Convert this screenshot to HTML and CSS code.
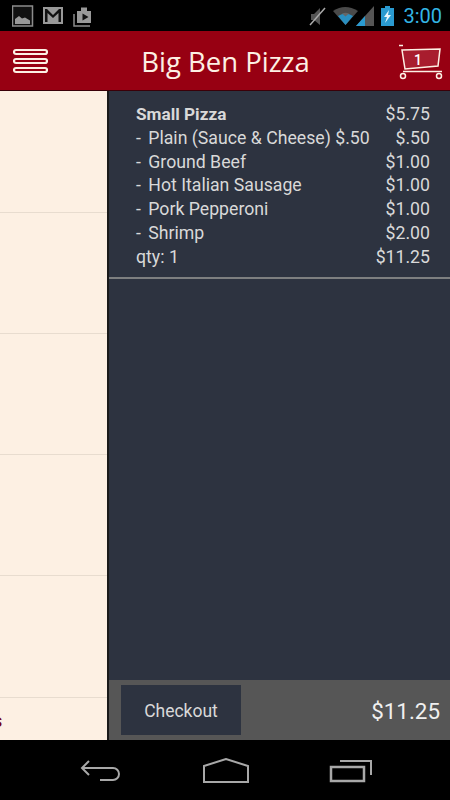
FILE: index.html
```html
<!DOCTYPE html>
<html lang="en">
<head>
<meta charset="utf-8">
<title>Big Ben Pizza</title>
<link rel="stylesheet" href="styles.css">
</head>
<body>
<div class="phone">
  <div class="status">
    <div class="status-left">
      <svg class="ic" width="22" height="22" viewBox="0 0 22 22"><rect x="0.500" y="1" width="20" height="20" fill="#111" stroke="#8c8c8c" stroke-width="1.500"/><path d="M3 19v-5l4-3 3 2.500 3-1 5 3V19z" fill="#999"/></svg>
      <svg class="ic" width="22" height="22" viewBox="0 0 22 22"><rect x="1" y="2" width="20" height="17" fill="#999"/><path d="M3 17V4h2l6 6 6-6h2v13h-2.500V8L11 13 5.500 8v9z" fill="#111"/></svg>
      <svg class="ic" width="22" height="22" viewBox="0 0 22 22"><path d="M2 9v12h16" fill="none" stroke="#8c8c8c" stroke-width="1.500"/><path d="M5 6h4V2.500h6V6h4v12H5z" fill="#999"/><path d="M10.500 8.500v7l6-3.500z" fill="#111"/></svg>
    </div>
    <div class="status-right">
      <svg class="ic" width="20" height="22" viewBox="0 0 20 22"><path d="M3 9h3l6-6v17l-6-5H3z" fill="#555"/><path d="M2 20L17 3" stroke="#aaa" stroke-width="1.500"/></svg>
      <svg class="ic wifi" width="25" height="20" viewBox="0 0 25 20"><path d="M0 5Q12-3 25 5L12.500 19z" fill="#4a4a4a"/><path d="M5 10Q12.500 5 20 10l-7.500 9z" fill="#2a8fc0"/><path d="M9 7.500Q12.500 6 16 7.500l-3.500 3z" fill="#666"/></svg>
      <svg class="ic signal" width="18" height="20" viewBox="0 0 18 20"><path d="M0 20L18 0v20z" fill="#555"/><path d="M0 20L9 10v10z" fill="#2a9ad0"/></svg>
      <svg class="ic batt" width="13" height="20" viewBox="0 0 13 20"><path d="M4 0h5v2h4v18H0V2h4z" fill="#2a9ad0"/><path d="M8 4L3 11h3l-2 6 6-8H7z" fill="#eaf6fc"/></svg>
      <span class="clock">3:00</span>
    </div>
  </div>
  <header class="appbar">
    <svg class="menu" width="36" height="28" viewBox="0 0 36 28"><g fill="none" stroke="#fdf0e4" stroke-width="2.200"><rect x="1" y="3" width="33" height="4" rx="2"/><rect x="1" y="12" width="33" height="4" rx="2"/><rect x="1" y="21" width="33" height="4" rx="2"/></g></svg>
    <h1 class="title">Big Ben Pizza</h1>
    <div class="cart">
      <svg width="48" height="38" viewBox="0 0 48 38"><path d="M4 3.500h4" stroke="#fdf0e4" stroke-width="1.500"/><path d="M7 8l38-1-2 17-33 3z" fill="#a81d2e" stroke="#fdf0e4" stroke-width="1.500"/><path d="M8 29.500h39" stroke="#fdf0e4" stroke-width="1.500"/><circle cx="8" cy="34" r="2.500" fill="none" stroke="#fdf0e4" stroke-width="1.500"/><circle cx="44" cy="34" r="2.500" fill="none" stroke="#fdf0e4" stroke-width="1.500"/></svg>
      <span class="cart-count">1</span>
    </div>
  </header>
  <main class="content">
    <div class="list">
      <div class="row"></div>
      <div class="row"></div>
      <div class="row"></div>
      <div class="row"></div>
      <div class="row tall"></div>
      <div class="row last"><span class="cut">s</span></div>
    </div>
    <div class="order">
      <div class="items">
        <div class="line"><span class="bold">Small Pizza</span><span>$5.75</span></div>
        <div class="line"><span><span class="dash">-</span> Plain (Sauce &amp; Cheese) $.50</span><span>$.50</span></div>
        <div class="line"><span><span class="dash">-</span> Ground Beef</span><span>$1.00</span></div>
        <div class="line"><span><span class="dash">-</span> Hot Italian Sausage</span><span>$1.00</span></div>
        <div class="line"><span><span class="dash">-</span> Pork Pepperoni</span><span>$1.00</span></div>
        <div class="line"><span><span class="dash">-</span> Shrimp</span><span>$2.00</span></div>
        <div class="line"><span>qty: 1</span><span>$11.25</span></div>
      </div>
      <div class="spacer"></div>
      <div class="footer">
        <button class="checkout">Checkout</button>
        <span class="total">$11.25</span>
      </div>
    </div>
  </main>
  <nav class="navbar">
    <svg width="44" height="26" viewBox="0 0 44 26"><path d="M10 3L3 10l7 7M3 10h31a6 6 0 0 1 0 12H21" fill="none" stroke="#a8a8a8" stroke-width="2"/></svg>
    <svg width="48" height="26" viewBox="0 0 48 26"><path d="M2 8L24 1l22 7v16H2z" fill="none" stroke="#a8a8a8" stroke-width="2"/></svg>
    <svg width="44" height="26" viewBox="0 0 44 26"><rect x="2" y="9" width="33" height="14" fill="none" stroke="#a8a8a8" stroke-width="2.500"/><path d="M11 3h31v14" fill="none" stroke="#a8a8a8" stroke-width="2"/></svg>
  </nav>
</div>
</body>
</html>
```
FILE: styles.css
```css
* { box-sizing: border-box; }
html, body { margin: 0; padding: 0; }
body { width: 450px; height: 800px; overflow: hidden; font-family: Roboto, sans-serif; background: #000; }
.phone { width: 450px; height: 800px; display: flex; flex-direction: column; }
.status { height: 31px; flex: none; background: #000; display: flex; justify-content: space-between; align-items: center; padding: 0 8px 0 12px; }
.status-left { display: flex; gap: 8px; align-items: center; }
.status-right { display: flex; align-items: center; }
.ic { display: block; }
.wifi { margin-left: 5px; }
.signal { margin-left: -2px; }
.batt { margin: 0 9px 0 7px; }
.clock { color: #33b5e5; font-size: 20px; line-height: 22px; }
.appbar { height: 60px; flex: none; background: #970012; display: flex; align-items: center; padding: 0 7px 0 13px; border-bottom: 1px solid #3a0008; }
.menu { display: block; flex: none; margin-top: 1px; }
.title { margin: 0; flex: 1; text-align: center; color: #fdf0e4; font-family: "Open Sans", sans-serif; font-weight: 400; font-size: 27.500px; padding: 2px 0 0 7px; }
.cart { position: relative; width: 48px; height: 38px; flex: none; }
.cart svg { display: block; }
.cart-count { position: absolute; left: 0; right: 2px; top: 10px; text-align: center; color: #fff; font-size: 14px; line-height: 16px; font-weight: 500; }
.content { flex: 1; min-height: 0; display: flex; }
.list { width: 107px; flex: none; background: #fdf0e3; display: flex; flex-direction: column; overflow: hidden; padding-top: 1px; }
.row { height: 121px; flex: none; border-bottom: 1px solid #e8dccf; }
.row.tall { height: 122px; }
.row.last { border: 0; height: 42px; color: #7a0010; font-size: 18px; }
.cut { display: block; margin-left: -7px; padding-top: 11px; line-height: 24px; font-weight: 500; }
.order { flex: 1; background: #2d3340; border-left: 2px solid #1a1a1a; display: flex; flex-direction: column; }
.items { padding: 12px 20px 7px 27px; border-bottom: 2px solid #7d7f80; }
.line { display: flex; justify-content: space-between; color: #d9d9d9; font-size: 17.700px; line-height: 23.800px; height: 23.800px; white-space: nowrap; }
.dash { margin-right: 3px; }
.bold { font-weight: 700; font-size: 17.200px; }
.spacer { flex: 1; }
.footer { height: 60px; flex: none; background: #565656; display: flex; align-items: center; justify-content: space-between; padding: 0 10px 0 12px; }
.checkout { width: 120px; height: 50px; border: 0; background: #2d3340; color: #d9d9d9; font: 400 17.500px Roboto, sans-serif; padding: 2px 0 0; }
.total { color: #f0f0f0; font-size: 22.400px; padding-top: 2px; }
.navbar { height: 60px; flex: none; background: #000; display: flex; align-items: center; justify-content: center; gap: 79px; padding: 2px 0 0 2px; }
.navbar svg { display: block; }
```
